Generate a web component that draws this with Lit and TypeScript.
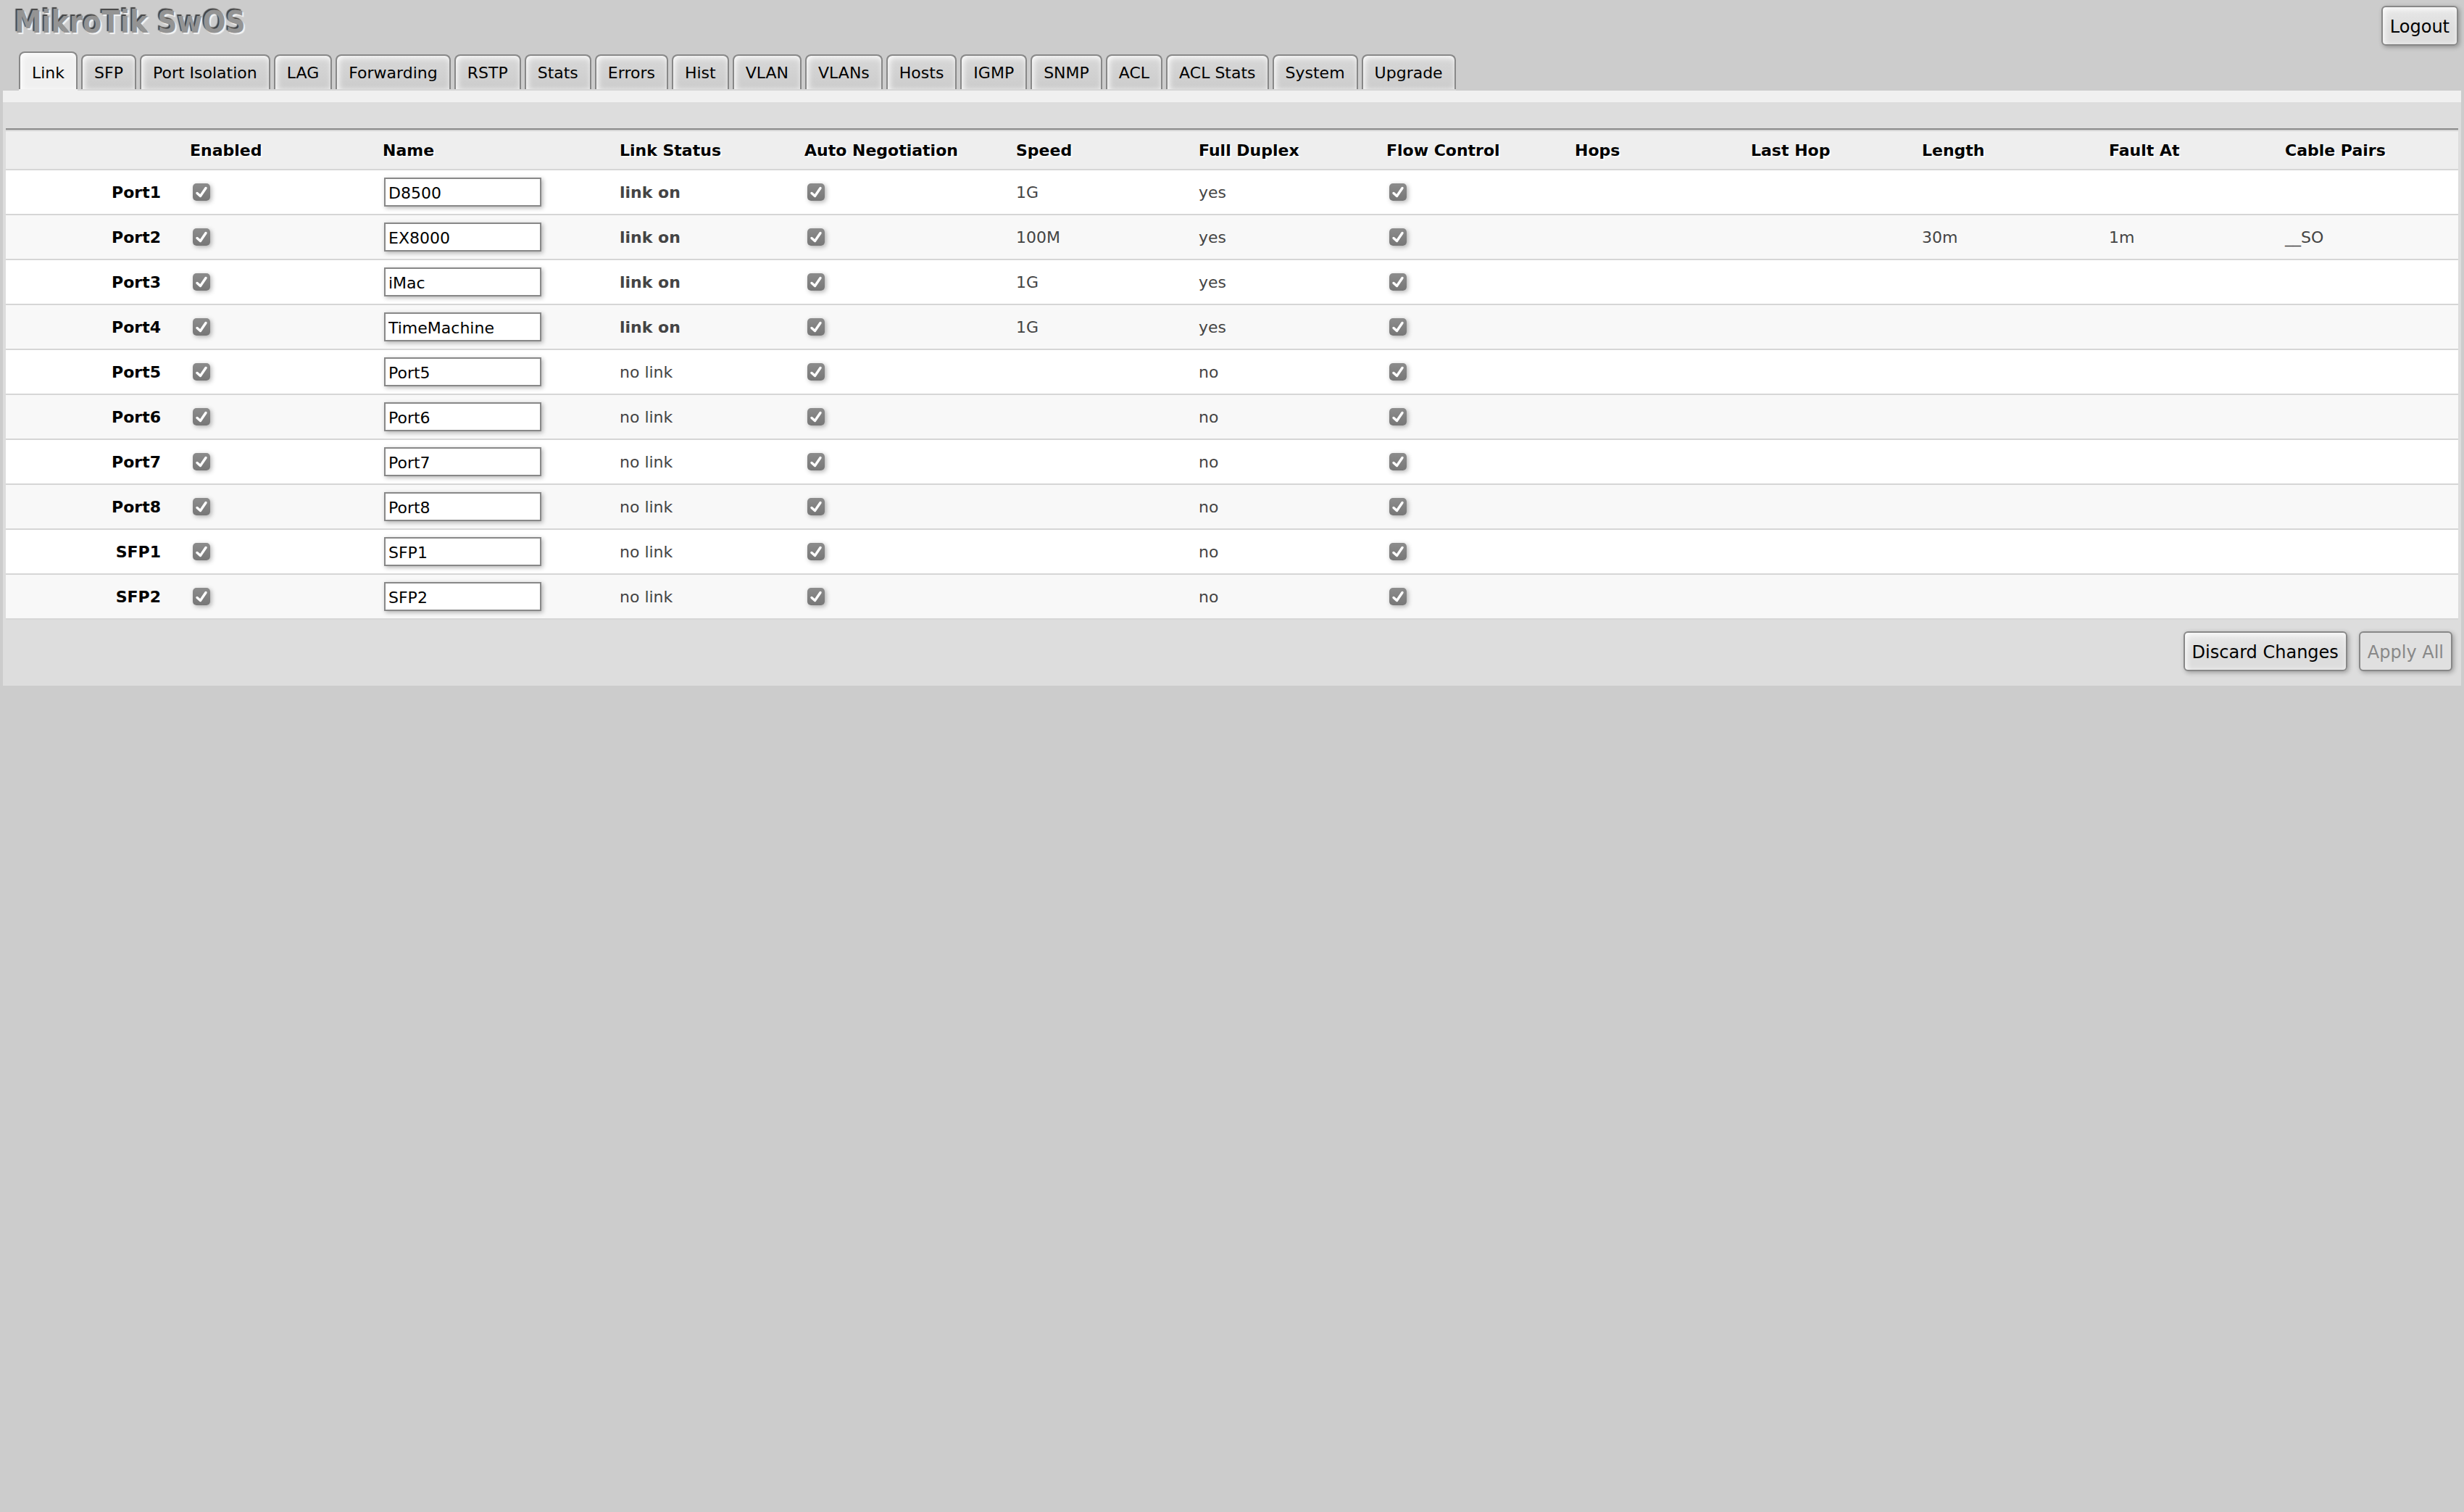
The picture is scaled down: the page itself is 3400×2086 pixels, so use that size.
import { LitElement, html, css, nothing } from "lit";
import { customElement, state } from "lit/decorators.js";

interface Port {
  label: string;
  name: string;
  up: boolean;
  speed: string;
  length?: string;
  fault?: string;
  pairs?: string;
}

const TABS = [
  "Link", "SFP", "Port Isolation", "LAG", "Forwarding", "RSTP", "Stats", "Errors", "Hist",
  "VLAN", "VLANs", "Hosts", "IGMP", "SNMP", "ACL", "ACL Stats", "System", "Upgrade",
];

const PORTS: Port[] = [
  { label: "Port1", name: "D8500", up: true, speed: "1G" },
  { label: "Port2", name: "EX8000", up: true, speed: "100M", length: "30m", fault: "1m", pairs: "__SO" },
  { label: "Port3", name: "iMac", up: true, speed: "1G" },
  { label: "Port4", name: "TimeMachine", up: true, speed: "1G" },
  { label: "Port5", name: "Port5", up: false, speed: "" },
  { label: "Port6", name: "Port6", up: false, speed: "" },
  { label: "Port7", name: "Port7", up: false, speed: "" },
  { label: "Port8", name: "Port8", up: false, speed: "" },
  { label: "SFP1", name: "SFP1", up: false, speed: "" },
  { label: "SFP2", name: "SFP2", up: false, speed: "" },
];

const COLUMNS: [string, number][] = [
  ["", 242], ["Enabled", 266], ["Name", 327], ["Link Status", 255], ["Auto Negotiation", 292],
  ["Speed", 252], ["Full Duplex", 259], ["Flow Control", 260], ["Hops", 243], ["Last Hop", 236],
  ["Length", 258], ["Fault At", 243], ["Cable Pairs", 251],
];

@customElement("check-box")
class CheckBox extends LitElement {
  static properties = { label: {} };
  declare label: string;

  static styles = css`
    :host {
      display: block;
    }
    .wrap {
      display: grid;
      width: 24px;
      height: 24px;
    }
    .box,
    .mark {
      grid-area: 1 / 1;
    }
    .box {
      appearance: none;
      margin: 0;
      width: 24px;
      height: 24px;
      border-radius: 5px;
      background: #eee;
      box-shadow: 2px 2px 6px rgba(0, 0, 0, 0.3);
    }
    .box:checked {
      background: linear-gradient(#8c8c8c, #777);
    }
    .mark {
      display: none;
      pointer-events: none;
    }
    .box:checked + .mark {
      display: block;
    }
  `;

  render() {
    return html`<div class="wrap">
      <input class="box" type="checkbox" checked aria-label=${this.label} />
      <svg class="mark" width="24" height="24" viewBox="0 0 24 24" fill="none" aria-hidden="true">
        <path d="M6 13.5 L10.5 17.5 L18 6.5" stroke="#fff" stroke-width="3.4" stroke-linecap="round" stroke-linejoin="round" />
      </svg>
    </div>`;
  }
}

@customElement("app-root")
class AppRoot extends LitElement {
  @state() private tab = "Link";

  static styles = css`
    :host {
      display: block;
      box-sizing: border-box;
      min-height: 100vh;
      padding: 8px 4px;
      background: #ccc;
      color: #000;
      font: 22px/28px Verdana, "DejaVu Sans", sans-serif;
    }
    .top {
      display: flex;
      justify-content: space-between;
      align-items: flex-start;
      height: 63px;
      padding: 0 4px 0 16px;
    }
    .brand {
      margin: 0;
      font: 700 42px/46px "DejaVu Sans Condensed", "Open Sans", sans-serif;
      color: #949494;
      text-shadow: -2px -2px 1px #444, 2px 2px 1px #f4f4f4;
    }
    .tabs {
      display: flex;
      align-items: flex-end;
      gap: 5px;
      width: fit-content;
      margin-left: 22px;
      border-bottom: 2px solid #d6d6d6;
    }
    .tab {
      box-sizing: border-box;
      height: 48px;
      padding: 2px 16px 0;
      border: 2px solid #888;
      border-bottom: 0;
      border-radius: 8px 8px 0 0;
      background: linear-gradient(#d8d8d8, #ccc);
      box-shadow: inset 2px 2px 8px #fff;
      color: #000;
      font: inherit;
      white-space: nowrap;
    }
    .tab.active {
      height: 52px;
      padding-top: 6px;
      background: #f0f0f0;
      box-shadow: inset 2px 2px 8px #fff, 0 2px #f0f0f0;
    }
    .strip {
      height: 16px;
      background: #f0f0f0;
    }
    .panel {
      padding: 36px 4px 20px;
      background: #ddd;
    }
    .ports {
      width: 100%;
      table-layout: fixed;
      border-collapse: separate;
      border-spacing: 0;
      border-top: 2px solid #8a8a8a;
    }
    .ports th,
    .ports td {
      box-sizing: border-box;
      height: 62px;
      padding: 2px 0 0 12px;
      border-bottom: 2px solid #d6d6d6;
      text-align: left;
      vertical-align: middle;
      color: #444;
    }
    .ports .head {
      height: 56px;
      border-top: 2px solid #d6d6d6;
      background: #eee;
      color: #000;
      text-shadow: 2px 2px 1px #fff;
    }
    .ports .label {
      padding-right: 28px;
      text-align: right;
      color: #000;
    }
    .odd {
      background: #fff;
    }
    .even {
      background: #f8f8f8;
    }
    .up {
      font-weight: 700;
    }
    .ports .tick {
      padding: 0 0 0 16px;
    }
    .ports .field {
      padding: 0 0 0 14px;
    }
    .name {
      display: block;
      box-sizing: border-box;
      width: 217px;
      height: 40px;
      padding: 2px 4px 0;
      border: 2px solid #888;
      border-radius: 0;
      background: #fff;
      box-shadow: 2px 2px 6px rgba(0, 0, 0, 0.3);
      color: #000;
      font: inherit;
    }
    .actions {
      display: flex;
      justify-content: flex-end;
      gap: 16px;
      padding: 16px 8px 0;
    }
    .btn {
      box-sizing: border-box;
      height: 55px;
      padding: 2px 10px 0;
      border: 2px solid #888;
      border-radius: 6px;
      background: linear-gradient(#e8e8e8, #ddd 60%);
      box-shadow: inset 2px 2px 8px #fff, 2px 2px 6px rgba(0, 0, 0, 0.3);
      color: #000;
      font-family: inherit;
      font-size: 24px;
      white-space: nowrap;
    }
    .btn:disabled {
      background: #e0e0e0;
      box-shadow: 2px 2px 6px rgba(0, 0, 0, 0.3);
      color: #888;
    }
  `;

  private row(p: Port, i: number) {
    return html`<tr class=${i % 2 ? "even" : "odd"}>
      <th class="label" scope="row">${p.label}</th>
      <td class="tick"><check-box .label=${`${p.label} enabled`}></check-box></td>
      <td class="field"><input class="name" type="text" aria-label=${`${p.label} name`} .value=${p.name} /></td>
      <td class=${p.up ? "up" : nothing}>${p.up ? "link on" : "no link"}</td>
      <td class="tick"><check-box .label=${`${p.label} auto negotiation`}></check-box></td>
      <td>${p.speed}</td>
      <td>${p.up ? "yes" : "no"}</td>
      <td class="tick"><check-box .label=${`${p.label} flow control`}></check-box></td>
      <td></td>
      <td></td>
      <td>${p.length}</td>
      <td>${p.fault}</td>
      <td>${p.pairs}</td>
    </tr>`;
  }

  render() {
    return html`
      <header class="top">
        <h1 class="brand">MikroTik SwOS</h1>
        <button class="btn" type="button">Logout</button>
      </header>
      <nav class="tabs">
        ${TABS.map(
          (t) => html`<button
            class="tab ${t === this.tab ? "active" : ""}"
            type="button"
            @click=${() => (this.tab = t)}
          >${t}</button>`,
        )}
      </nav>
      <div class="strip"></div>
      <main class="panel">
        <table class="ports">
          <colgroup>
            ${COLUMNS.map(([, w]) => html`<col style="width:${w}px" />`)}
          </colgroup>
          <thead>
            <tr>
              ${COLUMNS.map(([c]) => (c ? html`<th class="head" scope="col">${c}</th>` : html`<td class="head"></td>`))}
            </tr>
          </thead>
          <tbody>
            ${PORTS.map((p, i) => this.row(p, i))}
          </tbody>
        </table>
        <div class="actions">
          <button class="btn" type="button">Discard Changes</button>
          <button class="btn" type="button" disabled>Apply All</button>
        </div>
      </main>
    `;
  }
}
